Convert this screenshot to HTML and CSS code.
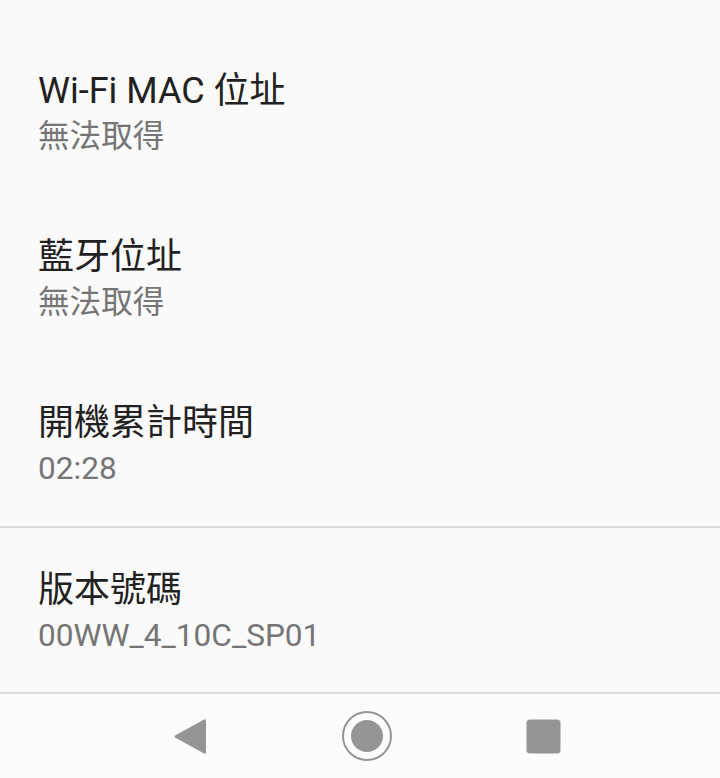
FILE: index.html
```html
<!DOCTYPE html>
<html lang="zh-Hant">
<head>
<meta charset="utf-8">
<title>關於手機</title>
<link rel="stylesheet" href="styles.css">
</head>
<body>
<div class="screen">
  <main class="list">
    <div class="spacer"></div>
    <div class="item">
      <div class="title">Wi-Fi MAC 位址</div>
      <div class="summary">無法取得</div>
    </div>
    <div class="item">
      <div class="title">藍牙位址</div>
      <div class="summary">無法取得</div>
    </div>
    <div class="item">
      <div class="title">開機累計時間</div>
      <div class="summary">02:28</div>
    </div>
    <div class="divider"></div>
    <div class="item last">
      <div class="title">版本號碼</div>
      <div class="summary">00WW_4_10C_SP01</div>
    </div>
  </main>
  <nav class="navbar">
    <svg class="nav-back" width="34" height="37" viewBox="0 0 34 37">
      <path d="M31 1.5 Q33 0.5 33 3 L33 34 Q33 36.5 31 35.5 L2 19.6 Q0.5 18.5 2 17.4 Z" fill="#959595"/>
    </svg>
    <svg class="nav-home" width="52" height="52" viewBox="0 0 52 52">
      <circle cx="26" cy="26" r="24" fill="none" stroke="#959595" stroke-width="2"/>
      <circle cx="26" cy="26" r="16" fill="#959595"/>
    </svg>
    <svg class="nav-recent" width="35" height="35" viewBox="0 0 35 35">
      <rect x="0.5" y="0.5" width="34" height="34" rx="3.5" fill="#959595"/>
    </svg>
  </nav>
</div>
</body>
</html>
```

FILE: styles.css
```css
html, body {
  margin: 0;
  padding: 0;
}

body {
  background: #fafafa;
  font-family: Roboto, "Noto Sans CJK TC", "Noto Sans", sans-serif;
  -webkit-font-smoothing: antialiased;
}

.screen {
  width: 720px;
  height: 778px;
  display: flex;
  flex-direction: column;
  overflow: hidden;
}

.list {
  display: flex;
  flex-direction: column;
  background: #fafafa;
}

.spacer {
  height: 28px;
}

.item {
  height: 166px;
  padding: 5px 38px 0;
  display: flex;
  flex-direction: column;
  justify-content: center;
  box-sizing: border-box;
}

.item.last {
  height: 164px;
}

.title {
  font-size: 36px;
  line-height: 47px;
  color: #212121;
}

.summary {
  font-size: 31.6px;
  line-height: 44px;
  color: #757575;
}

.divider {
  height: 2px;
  background: #dcdcdc;
}

.navbar {
  flex: 1;
  border-top: 2px solid #dcdcdc;
  background: #fcfcfc;
  display: flex;
  align-items: center;
  padding-left: 173px;
}

.nav-back {
  margin-right: 134px;
}

.nav-recent {
  margin-left: 133px;
}
```
